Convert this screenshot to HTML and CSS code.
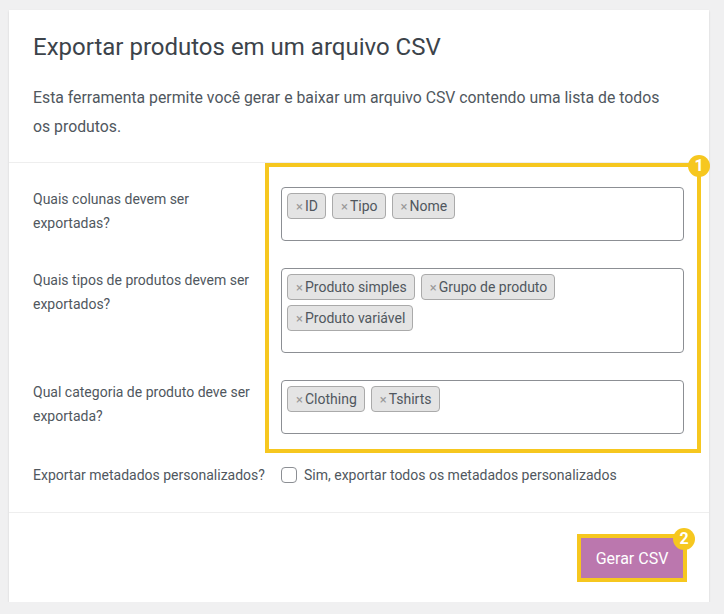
FILE: index.html
```html
<!DOCTYPE html>
<html lang="pt-BR">
<head>
<meta charset="utf-8">
<title>Exportar produtos</title>
<link rel="stylesheet" href="styles.css">
</head>
<body>
<form class="card">
  <header class="card-head">
    <h2 class="title">Exportar produtos em um arquivo CSV</h2>
    <p class="intro">Esta ferramenta permite você gerar e baixar um arquivo CSV contendo uma lista de todos os produtos.</p>
  </header>

  <section class="fields">
    <div class="field">
      <label class="field-label">Quais colunas devem ser exportadas?</label>
      <ul class="tags">
        <li class="tag"><span class="tag-x">×</span>ID</li>
        <li class="tag"><span class="tag-x">×</span>Tipo</li>
        <li class="tag"><span class="tag-x">×</span>Nome</li>
      </ul>
    </div>
    <div class="field">
      <label class="field-label">Quais tipos de produtos devem ser exportados?</label>
      <ul class="tags">
        <li class="tag"><span class="tag-x">×</span>Produto simples</li>
        <li class="tag"><span class="tag-x">×</span>Grupo de produto</li>
        <li class="tag"><span class="tag-x">×</span>Produto variável</li>
      </ul>
    </div>
    <div class="field">
      <label class="field-label">Qual categoria de produto deve ser exportada?</label>
      <ul class="tags">
        <li class="tag"><span class="tag-x">×</span>Clothing</li>
        <li class="tag"><span class="tag-x">×</span>Tshirts</li>
      </ul>
    </div>
    <div class="field field-check">
      <label class="field-label nowrap">Exportar metadados personalizados?</label>
      <label class="check"><span class="check-box"></span>Sim, exportar todos os metadados personalizados</label>
    </div>

    <div class="callout"><span class="step">1</span></div>
  </section>

  <footer class="card-foot">
    <div class="btn-wrap">
      <button type="button" class="btn">Gerar CSV</button>
      <span class="step step-btn">2</span>
    </div>
  </footer>
</form>
</body>
</html>
```

FILE: styles.css
```css
* {
  box-sizing: border-box;
}

body {
  margin: 0;
  padding: 10px 0 0 9px;
  background: #f0f0f1;
  font-family: Roboto, "Noto Sans", Arial, sans-serif;
  color: #50575e;
}

.card {
  position: relative;
  width: 700px;
  background: #fff;
  box-shadow: 0 1px 2px rgba(0, 0, 0, 0.12);
}

.card-head {
  padding: 21px 25px 21px 24px;
}

.title {
  margin: 0;
  font-size: 24px;
  line-height: 32px;
  font-weight: 400;
  color: #3c434a;
}

.intro {
  max-width: 636px;
  margin: 20px 0 0;
  font-size: 15.8px;
  line-height: 29px;
}

.fields {
  position: relative;
  border-top: 1px solid #eeeeee;
  padding: 24px 25px 25px 24px;
  display: flex;
  flex-direction: column;
  gap: 27px;
}

.field {
  display: grid;
  grid-template-columns: 224px 1fr;
  column-gap: 24px;
  align-items: start;
}

.field-check {
  margin-top: 2px;
}

.field-label {
  font-size: 14px;
  line-height: 24px;
  color: #50575e;
}

.nowrap {
  white-space: nowrap;
}

.tags {
  list-style: none;
  margin: 0;
  padding: 5px 5px 21px;
  border: 1px solid #8c8f94;
  border-radius: 4px;
  display: flex;
  flex-wrap: wrap;
  gap: 5px 6px;
}

.tag {
  height: 26px;
  padding: 0 7px 0 8px;
  border: 1px solid #aaaaaa;
  border-radius: 4px;
  background: #e4e4e4;
  font-size: 14px;
  line-height: 24px;
  color: #50575e;
}

.tag-x {
  margin-right: 2px;
  font-size: 13px;
  color: #999999;
}

.check {
  display: flex;
  align-items: center;
  gap: 7px;
  font-size: 14px;
  line-height: 24px;
}

.check-box {
  width: 16px;
  height: 16px;
  border: 1px solid #8c8f94;
  border-radius: 4px;
  background: #fff;
}

/* highlight frame around the selection fields */
.callout {
  position: absolute;
  left: 256px;
  top: 0;
  width: 436px;
  height: 290px;
  border: 4px solid #f6c71f;
  pointer-events: none;
}

.step {
  position: absolute;
  width: 22px;
  height: 22px;
  border-radius: 50%;
  background: #f6c71f;
  color: #fff;
  font-size: 16px;
  font-weight: 700;
  line-height: 22px;
  text-align: center;
}

.callout .step {
  top: -12px;
  right: -13px;
}

.card-foot {
  border-top: 1px solid #eeeeee;
  padding: 25px 26px 24px 24px;
  display: flex;
  justify-content: flex-end;
}

.btn-wrap {
  position: relative;
}

.btn {
  display: block;
  width: 102px;
  height: 40px;
  border: 0;
  border-radius: 0;
  background: #bb77ae;
  color: #fff;
  font-family: inherit;
  font-size: 16px;
  outline: 4px solid #f6c71f;
}

.step-btn {
  top: -10px;
  right: -12px;
}
```
